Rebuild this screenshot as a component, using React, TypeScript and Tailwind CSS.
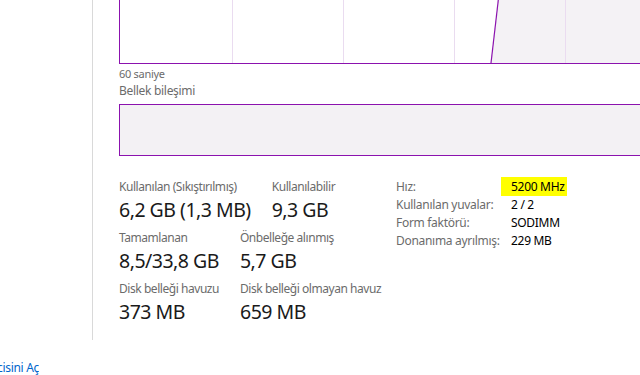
import React from "react"

const leftStats = [
  [
    { label: "Kullanılan (Sıkıştırılmış)", value: "6,2 GB (1,3 MB)" },
    { label: "Kullanılabilir", value: "9,3 GB" },
  ],
  [
    { label: "Tamamlanan", value: "8,5/33,8 GB" },
    { label: "Önbelleğe alınmış", value: "5,7 GB" },
  ],
  [
    { label: "Disk belleği havuzu", value: "373 MB" },
    { label: "Disk belleği olmayan havuz", value: "659 MB" },
  ],
]

const rightStats = [
  { label: "Hız:", value: "5200 MHz", mark: true },
  { label: "Kullanılan yuvalar:", value: "2 / 2" },
  { label: "Form faktörü:", value: "SODIMM" },
  { label: "Donanıma ayrılmış:", value: "229 MB" },
]

const UsageChart = () => (
  <svg width="540" height="63" className="block">
    <polygon points="371,63 378.3,0 540,0 540,63" fill="#f4f2f5" />
    {[112, 223, 334, 445].map((x) => (
      <line key={x} x1={x + 0.5} y1="0" x2={x + 0.5} y2="63" stroke="#eadcf0" strokeWidth="1" />
    ))}
    <line x1="371" y1="63" x2="378.3" y2="0" stroke="#8b12ae" strokeWidth="1.2" />
  </svg>
)

export default function App() {
  return (
    <div
      className="w-[640px] h-[375px] bg-white overflow-hidden text-[12px] tracking-[-0.3px]"
      style={{ fontFamily: "'Noto Sans', 'Open Sans', sans-serif" }}
    >
      <div className="flex h-[340px]">
        <div className="w-[92px] shrink-0" />
        <div className="flex-1 border-l border-[#d9d9d9] pl-[26px] min-w-0">
          {/* Usage graph */}
          <div className="w-[600px] h-[64px] border-l border-b border-[#8b12ae]">
            <UsageChart />
          </div>
          <div className="mt-[3px] text-[11px] leading-[14px] text-[#6b6b6b]">60 saniye</div>
          <div className="mt-[2px] leading-[16px] text-[#6b6b6b]">Bellek bileşimi</div>

          {/* Composition bar */}
          <div className="mt-[5px] w-[600px] h-[52px] border border-[#8b12ae] bg-[#f3f1f4]" />

          {/* Stats */}
          <div className="mt-[22px] flex items-start">
            <div className="w-[277px] shrink-0 pt-[1px] flex flex-col gap-[7px]">
              {leftStats.map((row, i) => (
                <div key={i} className="flex gap-[21px]">
                  {row.map((s) => (
                    <div key={s.label} className="flex flex-col whitespace-nowrap">
                      <span className="leading-[16px] tracking-[-0.45px] text-[#6b6b6b]">{s.label}</span>
                      <span className="mt-[2px] text-[19.5px] leading-[26px] tracking-[-0.5px] text-[#1a1a1a]">
                        {s.value}
                      </span>
                    </div>
                  ))}
                </div>
              ))}
            </div>
            <div className="grid grid-cols-[115px_auto] content-start leading-[18px] whitespace-nowrap">
              {rightStats.map((s) => (
                <React.Fragment key={s.label}>
                  <span className="text-[#6b6b6b]">{s.label}</span>
                  <span className="text-black">
                    {s.mark ? (
                      <span className="bg-[#ffff00] -ml-[10px] pl-[10px] pr-[2px] py-[1px]">{s.value}</span>
                    ) : (
                      s.value
                    )}
                  </span>
                </React.Fragment>
              ))}
            </div>
          </div>
        </div>
      </div>

      {/* Footer link */}
      <div className="mt-[20px] w-[39px] overflow-hidden flex justify-end">
        <span className="whitespace-nowrap leading-[16px] text-[#0066cc]">Kaynak İzleyicisini Aç</span>
      </div>
    </div>
  )
}
